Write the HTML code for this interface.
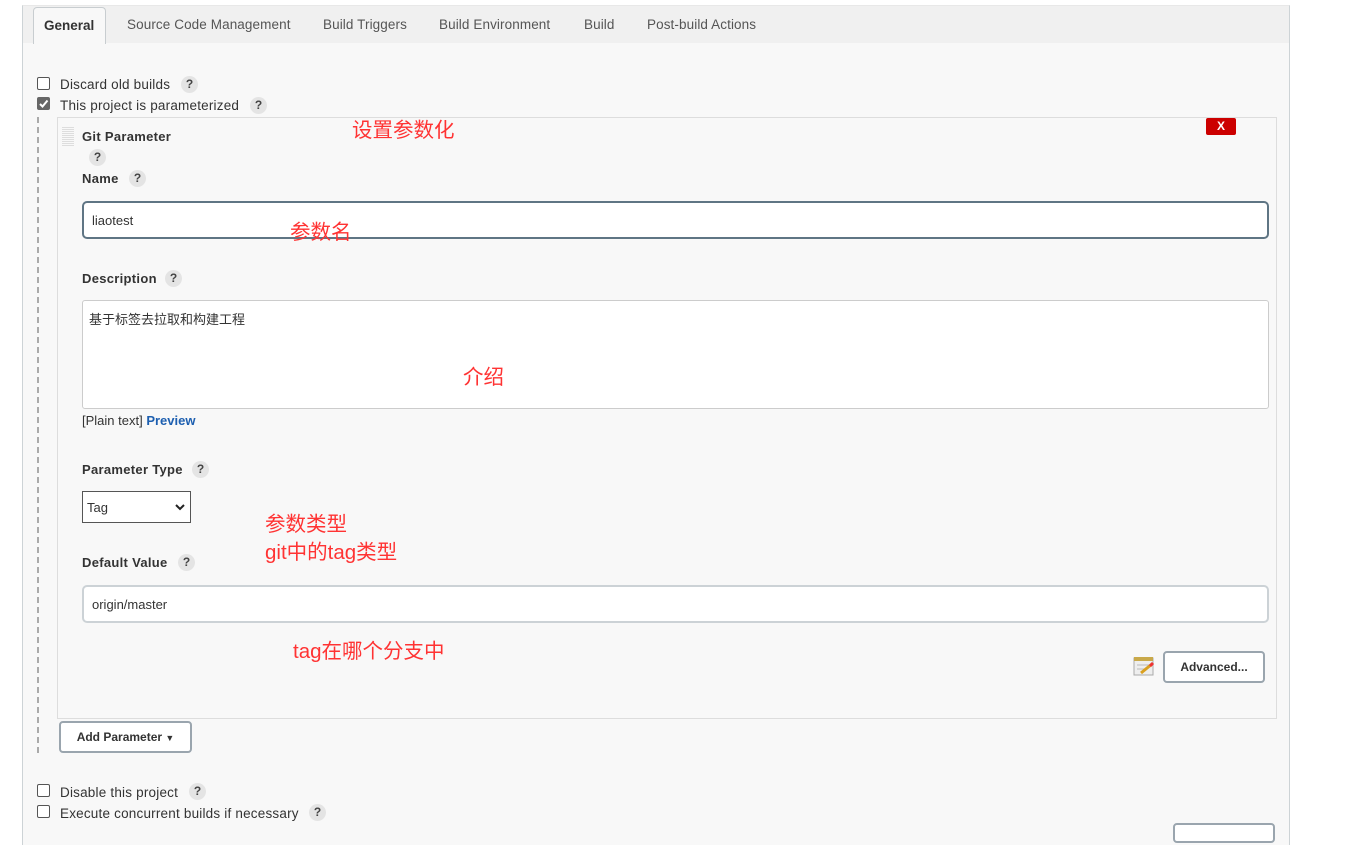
<!DOCTYPE html>
<html><head><meta charset="utf-8"><style>
*{box-sizing:border-box;margin:0;padding:0}
body{width:1357px;height:832px;background:#fff;font-family:"Liberation Sans","Noto Sans CJK SC",sans-serif;font-size:13px;color:#333;position:relative;overflow:hidden}
.a{position:absolute}
.panel{left:22px;top:5px;width:1268px;height:840px;background:#f8f8f8;border-left:1px solid #cdd3d6;border-right:1px solid #cdd3d6;border-top:1px solid #e8e8e8}
.tabbar{left:23px;top:6px;width:1266px;height:37px;background:#f0f0f0}
.tab{top:17px;font-size:13.5px;color:#555;letter-spacing:0.1px}
.gen{left:33px;top:7px;width:73px;height:37px;background:#f8f8f8;border:1px solid #c8cdd0;border-bottom:none;border-radius:4px 4px 0 0;font-weight:bold;font-size:13.5px;color:#333;padding:10px 0 0 10px}
.cb{width:13px;height:13px;border:1px solid #555;border-radius:2px;background:#fff}
.cbk{background:#666;border-color:#666}
.lbl{font-size:13.5px;color:#333;letter-spacing:0.2px}
.q{width:17px;height:17px;border-radius:50%;background:#e4e4e4;color:#444;font-size:12px;font-weight:bold;text-align:center;line-height:17px}
.b{font-weight:bold;font-size:13px;letter-spacing:0.3px}
.red{color:#f33;font-size:20.5px}
.inp{background:#fff;border-radius:5px}
.btn{background:#fff;border:2px solid #9aa5ae;border-radius:4px;font-weight:bold;font-size:12px;color:#333;text-align:center}
</style></head><body>
<div class="a panel"></div>
<div class="a tabbar"></div>
<div class="a gen">General</div>
<div class="a tab" style="left:127px">Source Code Management</div>
<div class="a tab" style="left:323px">Build Triggers</div>
<div class="a tab" style="left:439px">Build Environment</div>
<div class="a tab" style="left:584px">Build</div>
<div class="a tab" style="left:647px">Post-build Actions</div>

<div class="a cb" style="left:37px;top:77px"></div>
<div class="a lbl" style="left:60px;top:77px">Discard old builds</div>
<div class="a q" style="left:181px;top:76px">?</div>
<div class="a cb cbk" style="left:37px;top:97px"><svg width="11" height="11" style="position:absolute;left:0;top:0"><path d="M2 6 L4.5 8.5 L9.5 2.5" stroke="#fff" stroke-width="2" fill="none"/></svg></div>
<div class="a lbl" style="left:60px;top:98px">This project is parameterized</div>
<div class="a q" style="left:250px;top:97px">?</div>

<div class="a" style="left:37px;top:117px;height:636px;border-left:2px dashed #aaa"></div>
<div class="a" style="left:57px;top:117px;width:1220px;height:602px;border:1px solid #ddd;background:#f8f8f8"></div>
<div class="a" style="left:62px;top:126px;width:12px;height:20px;background:repeating-linear-gradient(0deg,#ddd 0 1px,transparent 1px 2px)"></div>
<div class="a b" style="left:82px;top:129px">Git Parameter</div>
<div class="a q" style="left:89px;top:149px">?</div>
<div class="a" style="left:1206px;top:118px;width:30px;height:17px;background:#c00;border-radius:2px;color:#fff;font-weight:bold;font-size:12px;text-align:center;line-height:17px">X</div>
<div class="a red" style="left:352px;top:113px">设置参数化</div>

<div class="a b" style="left:82px;top:171px">Name</div>
<div class="a q" style="left:129px;top:170px">?</div>
<div class="a inp" style="left:82px;top:201px;width:1187px;height:38px;border:2px solid #5f7584;padding:10px 8px;font-size:13px">liaotest</div>
<div class="a red" style="left:290px;top:215px">参数名</div>

<div class="a b" style="left:82px;top:271px">Description</div>
<div class="a q" style="left:165px;top:270px">?</div>
<div class="a inp" style="left:82px;top:300px;width:1187px;height:109px;border:1px solid #ccc;border-radius:3px;padding:8px 6px;font-size:13px">基于标签去拉取和构建工程</div>
<div class="a red" style="left:463px;top:360px">介绍</div>
<div class="a" style="left:82px;top:413px">[Plain text] <span style="color:#1d5fb0;font-weight:bold">Preview</span></div>

<div class="a b" style="left:82px;top:462px">Parameter Type</div>
<div class="a q" style="left:192px;top:461px">?</div>
<div class="a" style="left:82px;top:491px;width:109px;height:32px;background:#fff;border:1px solid #555;padding:8px 4px;font-size:13px">Tag<svg class="a" style="right:5px;top:12px" width="10" height="7"><path d="M1 1 L5 5 L9 1" stroke="#222" stroke-width="2" fill="none"/></svg></div>
<div class="a red" style="left:265px;top:511px;line-height:28px">参数类型<br>git中的tag类型</div>

<div class="a b" style="left:82px;top:555px">Default Value</div>
<div class="a q" style="left:178px;top:554px">?</div>
<div class="a inp" style="left:82px;top:585px;width:1187px;height:38px;border:2px solid #ccd2d6;padding:10px 8px;font-size:13px">origin/master</div>
<div class="a red" style="left:293px;top:634px">tag在哪个分支中</div>

<div class="a" style="left:1133px;top:656px;width:22px;height:22px"><svg width="22" height="22"><rect x="1" y="2" width="19" height="17" fill="#eee" stroke="#aaa"/><rect x="1" y="1" width="19" height="4" fill="#c9a94a"/><line x1="4" y1="9" x2="16" y2="9" stroke="#bbb"/><line x1="4" y1="13" x2="13" y2="13" stroke="#bbb"/><path d="M8 17 L19 8" stroke="#d9a020" stroke-width="3"/><path d="M17 10 L20 7" stroke="#e33" stroke-width="3"/></svg></div>
<div class="a btn" style="left:1163px;top:651px;width:102px;height:32px;line-height:28px">Advanced...</div>

<div class="a btn" style="left:59px;top:721px;width:133px;height:32px;line-height:28px">Add Parameter <span style="font-size:9px">▼</span></div>

<div class="a cb" style="left:37px;top:784px"></div>
<div class="a lbl" style="left:60px;top:785px">Disable this project</div>
<div class="a q" style="left:189px;top:783px">?</div>
<div class="a cb" style="left:37px;top:805px"></div>
<div class="a lbl" style="left:60px;top:806px">Execute concurrent builds if necessary</div>
<div class="a q" style="left:309px;top:804px">?</div>
<div class="a" style="left:1173px;top:823px;width:102px;height:20px;background:#fff;border:2px solid #9aa5ae;border-radius:4px"></div>
</body></html>
